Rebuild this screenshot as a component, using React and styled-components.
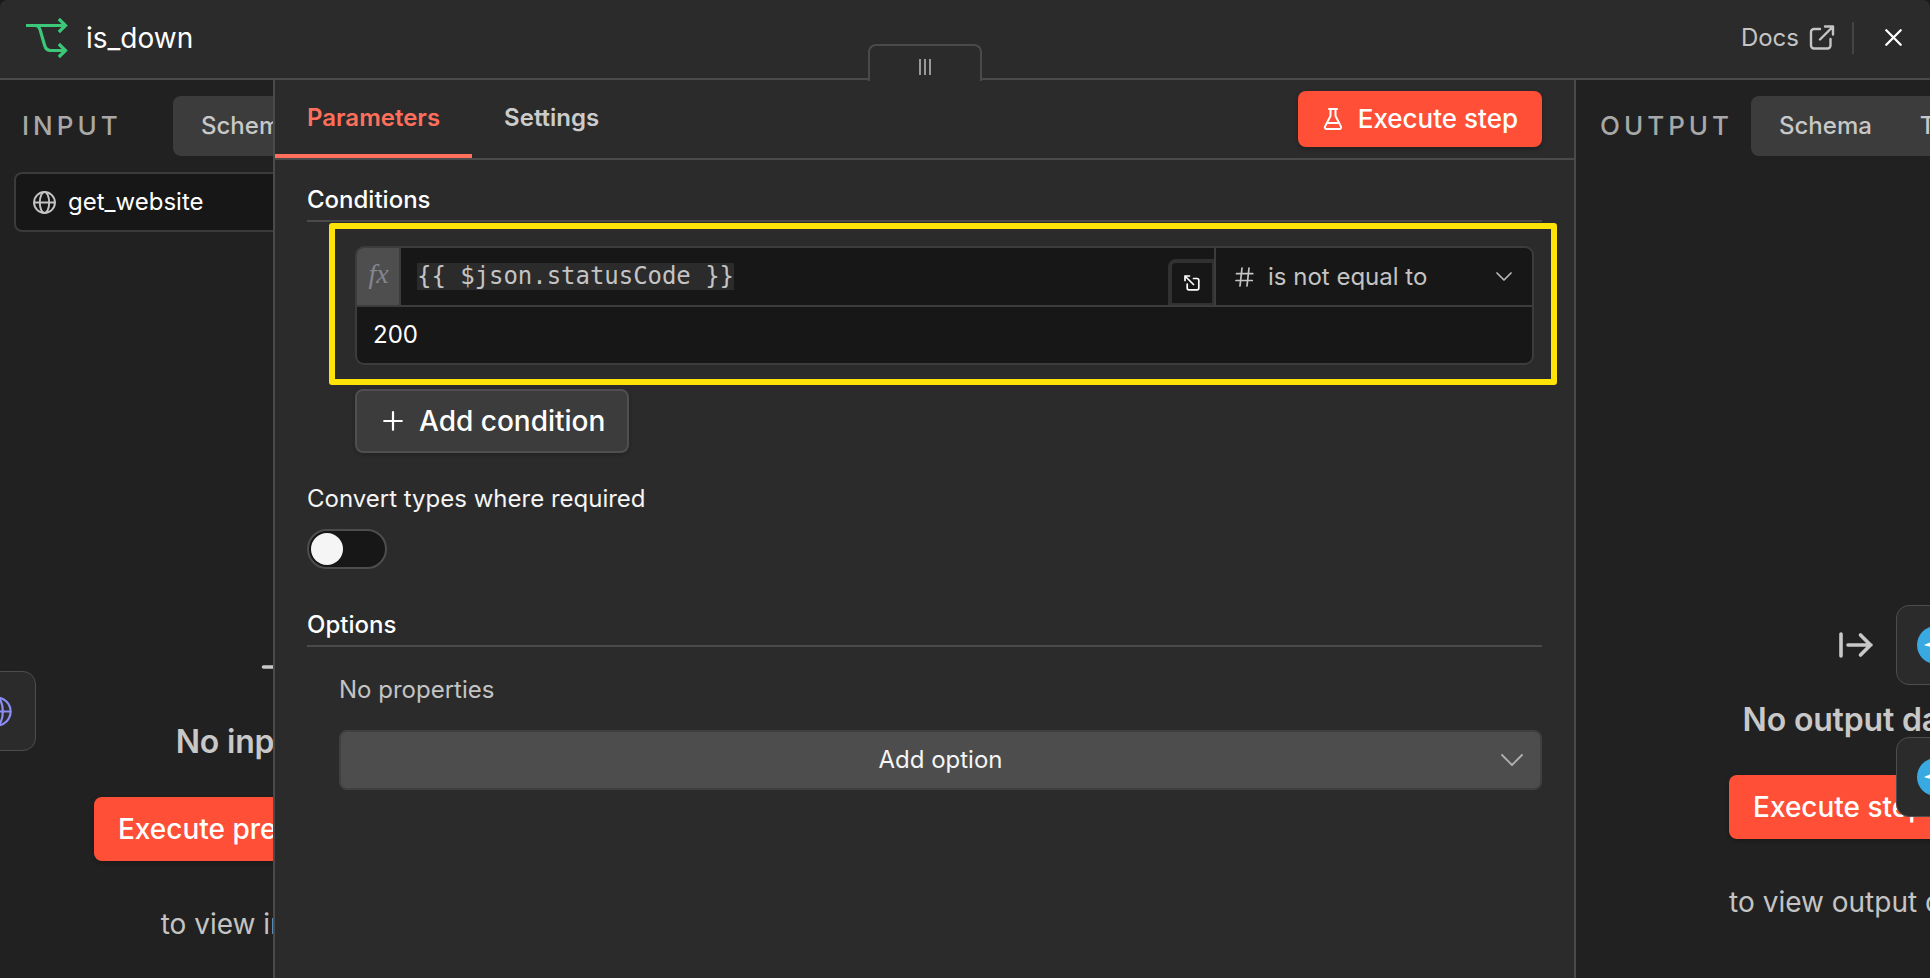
import React from "react";
import styled, { createGlobalStyle } from "styled-components";

const Global = createGlobalStyle`
  *, *::before, *::after { box-sizing: border-box; }
  html, body { margin: 0; padding: 0; background: #212121; overflow: hidden; }
  button { font: inherit; }
`;

const Window = styled.div`
  position: relative;
  width: 1930px;
  height: 978px;
  display: flex;
  flex-direction: column;
  overflow: hidden;
  background: #1a1a1a;
  color: #fff;
  font-family: Inter, "Liberation Sans", sans-serif;
  font-size: 24px;
  line-height: 30px;
  white-space: nowrap;
`;

const Header = styled.header`
  position: relative;
  flex: none;
  height: 80px;
  display: flex;
  align-items: center;
  padding: 0 28px 3px 26px;
  background: #2b2b2b;
  border-bottom: 2px solid #4a4a4a;
  border-radius: 7px 7px 0 0;
`;

const Title = styled.h1`
  margin: 0 0 0 18px;
  flex: 1;
  font-size: 28px;
  line-height: 34px;
  font-weight: 400;
`;

const DocsLink = styled.a`
  display: flex;
  align-items: center;
  gap: 10px;
  color: #c4c4c4;
`;

const HeaderRule = styled.span`
  width: 2px;
  height: 32px;
  margin: 0 31px 0 17px;
  background: #444;
`;

const DragHandle = styled.div`
  position: absolute;
  left: 868px;
  top: 44px;
  width: 114px;
  height: 37px;
  display: flex;
  justify-content: center;
  gap: 3.2px;
  padding-top: 13px;
  background: #2b2b2b;
  border: 2px solid #4a4a4a;
  border-bottom: 0;
  border-radius: 8px 8px 0 0;
`;

const Grip = styled.i`
  width: 2.2px;
  height: 16px;
  background: #999;
`;

const Columns = styled.div`
  flex: 1;
  display: flex;
  min-height: 0;
`;

const SidePanel = styled.aside`
  width: ${(p) => p.$width};
  flex: none;
  display: flex;
  flex-direction: column;
  overflow: hidden;
  background: #212121;
`;

const PanelHead = styled.div`
  flex: none;
  display: flex;
  align-items: center;
  margin-top: 16px;
  padding-left: ${(p) => p.$pad};
`;

const PanelLabel = styled.div`
  flex: none;
  width: ${(p) => p.$width};
  font-size: 26px;
  font-weight: 500;
  letter-spacing: 4px;
  color: #a8a8a8;
`;

const ViewSwitch = styled.div`
  flex: none;
  display: flex;
  align-items: center;
  gap: 48px;
  width: 400px;
  height: 60px;
  padding-left: 28px;
  border-radius: 8px;
  background: #3c3c3c;
  color: #c8c8c8;
  font-weight: 500;
`;

const SourceSelect = styled.div`
  flex: none;
  display: flex;
  align-items: center;
  gap: 12px;
  width: 400px;
  height: 60px;
  margin: 16px 0 0 14px;
  padding-left: 17px;
  border: 2px solid #3b3b3b;
  border-radius: 8px;
  background: #171717;
`;

const Empty = styled.div`
  flex: none;
  display: flex;
  flex-direction: column;
  align-items: center;
  align-self: flex-start;
  width: ${(p) => p.$width};
  margin: ${(p) => p.$margin};
`;

const EmptyTitle = styled.div`
  margin-top: 41px;
  font-size: 32px;
  line-height: 40px;
  font-weight: 600;
  letter-spacing: -0.18px;
  color: #c8c8c8;
`;

const EmptyNote = styled.div`
  margin-top: 45px;
  font-size: 28px;
  line-height: 36px;
  color: #c4c4c4;
`;

const PrimaryButton = styled.button`
  flex: none;
  display: flex;
  align-items: center;
  gap: ${(p) => (p.$large ? "0" : "14.5px")};
  height: ${(p) => (p.$large ? "64px" : "56px")};
  min-width: ${(p) => (p.$large ? "254px" : "0")};
  margin: ${(p) => (p.$large ? "35px 0 0" : "0")};
  padding: 0 ${(p) => (p.$large ? "24px" : "24px 0 25.5px")};
  border: 0;
  border-radius: 8px;
  background: #ff4f36;
  color: #fff;
  font-size: ${(p) => (p.$large ? "28px" : "26px")};
  font-weight: 500;
  box-shadow: 0 2px 4px rgba(0, 0, 0, 0.25);
`;

const Main = styled.main`
  width: 1303px;
  flex: none;
  border: solid #4a4a4a;
  border-width: 0 2px;
  background: #2b2b2b;
`;

const Tabs = styled.nav`
  display: flex;
  align-items: center;
  height: 80px;
  padding-right: 32px;
  border-bottom: 2px solid #4a4a4a;
`;

const Tab = styled.div`
  height: 78px;
  padding: 23px 32px 0;
  font-weight: 600;
  color: ${(p) => (p.$active ? "#ff6f5c" : "#cccccc")};
  border-bottom: 4px solid ${(p) => (p.$active ? "#ff6f5c" : "transparent")};
`;

const Grow = styled.span`
  flex: 1;
`;

const Form = styled.div`
  padding: 24px 32px 0;
`;

const SectionTitle = styled.h2`
  margin: ${(p) => p.$top || "0"} 0 0;
  padding-top: 1px;
  height: 38px;
  font-size: 24px;
  font-weight: 500;
  border-bottom: 2px solid #4a4a4a;
`;

const Filter = styled.section`
  position: relative;
  padding: 24px 8px 0 48px;
`;

const Highlight = styled.div`
  position: absolute;
  left: 22px;
  top: 1px;
  width: 1228px;
  height: 162px;
  border: 6px solid #ffe208;
  border-radius: 3px;
`;

const Condition = styled.div`
  height: 119px;
  border: 2px solid #3c3c3c;
  border-radius: 9px;
  background: #171717;
  overflow: hidden;
`;

const ConditionTop = styled.div`
  display: flex;
  height: 59px;
  border-bottom: 2px solid #3c3c3c;
`;

const FxBadge = styled.div`
  width: 44px;
  margin: -2px 0 0 -2px;
  padding: 11px 0 0 1px;
  text-align: center;
  border: solid #646464;
  border-width: 2px 0 0 2px;
  border-radius: 9px 0 0 0;
  background: #4e4e4e;
  color: #85858f;
  font-family: "Liberation Serif", serif;
  font-style: italic;
  font-size: 28px;
`;

const Expression = styled.div`
  flex: 1;
  padding: 13px 0 0 16px;
  border-left: 2px solid #3c3c3c;
`;

const Code = styled.code`
  display: inline-block;
  height: 27px;
  line-height: 27px;
  background: #2b2b2b;
  color: #c4c4c4;
  font-family: "DejaVu Sans Mono", monospace;
  font-size: 24px;
  letter-spacing: -0.04px;
`;

const ExpandButton = styled.div`
  display: flex;
  align-self: flex-end;
  width: 46px;
  height: 46px;
  padding: 12px 0 0 12px;
  border: 4px solid #313131;
  border-width: 4px 2px 2px 4px;
  border-radius: 8px 0 0 0;
`;

const Operator = styled.div`
  width: 318px;
  display: flex;
  align-items: center;
  padding: 0 20px 0 19px;
  border-left: 2px solid #3c3c3c;
  color: #c4c4c4;

  span { flex: 1; margin-left: 14px; }
`;

const ConditionValue = styled.div`
  display: flex;
  align-items: center;
  height: 56px;
  padding-left: 16px;
`;

const SecondaryButton = styled.button`
  display: flex;
  align-items: center;
  gap: 16px;
  width: 274px;
  height: 64px;
  margin-top: 24px;
  padding: 0 0 0 26px;
  border: 2px solid #4f4f4f;
  border-radius: 8px;
  background: #3c3c3c;
  color: #fff;
  font-size: 28px;
  font-weight: 500;
  box-shadow: 0 2px 4px rgba(0, 0, 0, 0.2);
`;

const FieldLabel = styled.div`
  margin-top: 31px;
  color: #f5f5f5;
`;

const Toggle = styled.div`
  width: 80px;
  height: 40px;
  margin-top: 15px;
  padding: 2px;
  border: 2px solid #4d4d4d;
  border-radius: 20px;
  background: #171717;
`;

const Knob = styled.div`
  width: 32px;
  height: 32px;
  border-radius: 50%;
  background: #f5f5f5;
`;

const Options = styled.div`
  padding: 28px 0 0 32px;
  color: #c4c4c4;
`;

const OptionSelect = styled.div`
  display: flex;
  align-items: center;
  height: 60px;
  margin-top: 25px;
  padding: 0 17px 0 39px;
  border: 2px solid #404040;
  border-radius: 8px;
  background: #4d4d4d;
  color: #f5f5f5;

  span { flex: 1; text-align: center; }
`;

const CanvasNode = styled.div`
  position: absolute;
  left: ${(p) => p.$x}px;
  top: ${(p) => p.$y}px;
  width: 80px;
  height: 80px;
  display: flex;
  align-items: center;
  justify-content: center;
  border: 1.5px solid #4d4d4d;
  border-radius: 13px;
  background: #2b2b2b;
`;

const stroke = { fill: "none", strokeLinecap: "round", strokeLinejoin: "round" };

const BranchIcon = () => (
  <svg width="42" height="42" viewBox="26 17 42 42" fill="none" stroke="#3bc878" strokeWidth="3.2">
    <path d="M26 25.5H65.5M58.8 19l6.7 6.5-6.7 6.5" />
    <path d="M35 25.5c3.2 0 4.3 1.5 5.2 4.6l4.4 15.2c1 3.6 2.4 5.2 5.9 5.2h15M58.8 44l6.7 6.5-6.7 6.5" />
  </svg>
);

const ExternalIcon = () => (
  <svg width="26" height="26" viewBox="0 0 26 26" {...stroke} stroke="#c4c4c4" strokeWidth="2.4">
    <path d="M16 1.500h8v8M24 1.500 11 14.500M11 4H5A3 3 0 0 0 2 7V20.500a3 3 0 0 0 3 3h13.500a3 3 0 0 0 3-3v-6.500" />
  </svg>
);

const CloseIcon = () => (
  <svg width="17" height="17" viewBox="0 0 17 17" {...stroke} stroke="#fff" strokeWidth="2.3">
    <path d="m1.300 1.300 14.400 14.400M15.700 1.300 1.300 15.700" />
  </svg>
);

const GlobeIcon = ({ size, color, width }) => (
  <svg width={size} height={size} viewBox="0 0 24 24" {...stroke} stroke={color} strokeWidth={width}>
    <circle cx="12" cy="12" r="10.900" />
    <ellipse cx="12" cy="12" rx="4.900" ry="10.900" />
    <path d="M1.200 12h21.600" />
  </svg>
);

const FlaskIcon = () => (
  <svg width="20" height="24" viewBox="0 0 20 24" {...stroke} stroke="#fff" strokeWidth="2">
    <path d="M6 2h8M7.500 2v7L2 19.600A1.700 1.700 0 0 0 3.500 22h13a1.700 1.700 0 0 0 1.500-2.400L12.500 9V2M4.500 16h11" />
  </svg>
);

const ExpandIcon = () => (
  <svg width="16" height="16" viewBox="0 0 16 16" {...stroke} stroke="#fff" strokeWidth="1.7">
    <path d="M1 5.500V1h4.500M1 1l8.500 8.500M9.500 3.500H13A1.800 1.800 0 0 1 14.800 5.300V13a1.800 1.800 0 0 1-1.800 1.800H5A1.800 1.800 0 0 1 3.200 13V9" />
  </svg>
);

const HashIcon = () => (
  <svg width="19" height="20" viewBox="0 0 19 20" {...stroke} stroke="#c4c4c4" strokeWidth="1.7">
    <path d="M1.500 6.700h16.300M1 13.500h16.300M7 1 5 19M14 1l-2 18" />
  </svg>
);

const PlusIcon = () => (
  <svg width="20" height="20" viewBox="0 0 20 20" {...stroke} stroke="#fff" strokeWidth="2.2">
    <path d="M10 1.200v17.600M1.200 10h17.600" />
  </svg>
);

const ChevronIcon = ({ width, height, color, weight }) => (
  <svg width={width} height={height} viewBox={`0 0 ${width} ${height}`} {...stroke} stroke={color} strokeWidth={weight}>
    <path d={`M1 1 L${width / 2} ${height - 1} L${width - 1} 1`} />
  </svg>
);

const ArrowFromBarIcon = () => (
  <svg width="35" height="28" viewBox="0 0 35 28" {...stroke} stroke="#c8c8c8" strokeWidth="3.6">
    <path d="M2 3v22M9 14H32M21.500 4l10 10-10 10" />
  </svg>
);

const ArrowIntoBarIcon = () => (
  <svg width="35" height="28" viewBox="0 0 35 28" {...stroke} stroke="#c8c8c8" strokeWidth="3.6">
    <path d="M2.500 14h23M15.500 4l10 10-10 10M33 3v22" />
  </svg>
);

const TelegramIcon = () => (
  <svg width="38" height="38" viewBox="0 0 38 38">
    <circle cx="19" cy="19" r="19" fill="#38aae1" />
    <path d="M8 18.600 28 10.500c1-.3 1.800.3 1.500 1.700l-3.400 15.600c-.3 1.200-1 1.400-2 .9l-5.200-3.900-2.600 2.500c-.6.600-1.300.3-1.400-.5l-1.200-5.800-5.500-1.500c-1-.3-1-.6-.2-.9Z" fill="#fff" />
  </svg>
);

export default function App() {
  return (
    <>
      <Global />
      <Window>
        <Header>
          <BranchIcon />
          <Title>is_down</Title>
          <DocsLink>
            Docs
            <ExternalIcon />
          </DocsLink>
          <HeaderRule />
          <CloseIcon />
          <DragHandle>
            <Grip />
            <Grip />
            <Grip />
          </DragHandle>
        </Header>

        <Columns>
          <SidePanel $width="273px">
            <PanelHead $pad="22px">
              <PanelLabel $width="151px">INPUT</PanelLabel>
              <ViewSwitch>Schema</ViewSwitch>
            </PanelHead>
            <SourceSelect>
              <GlobeIcon size={23} color="#c4c4c4" width={2} />
              get_website
            </SourceSelect>
            <Empty $width="370px" $margin="421px 0 0 93px">
              <ArrowIntoBarIcon />
              <EmptyTitle>No input data</EmptyTitle>
              <PrimaryButton $large>Execute previous nodes</PrimaryButton>
              <EmptyNote>to view input data</EmptyNote>
            </Empty>
          </SidePanel>

          <Main>
            <Tabs>
              <Tab $active>Parameters</Tab>
              <Tab>Settings</Tab>
              <Grow />
              <PrimaryButton>
                <FlaskIcon />
                Execute step
              </PrimaryButton>
            </Tabs>
            <Form>
              <SectionTitle>Conditions</SectionTitle>
              <Filter>
                <Condition>
                  <ConditionTop>
                    <FxBadge>fx</FxBadge>
                    <Expression>
                      <Code>{"{{ $json.statusCode }}"}</Code>
                    </Expression>
                    <ExpandButton>
                      <ExpandIcon />
                    </ExpandButton>
                    <Operator>
                      <HashIcon />
                      <span>is not equal to</span>
                      <ChevronIcon width={16} height={9} color="#b8b8b8" weight={1.7} />
                    </Operator>
                  </ConditionTop>
                  <ConditionValue>200</ConditionValue>
                </Condition>
                <SecondaryButton>
                  <PlusIcon />
                  Add condition
                </SecondaryButton>
                <Highlight />
              </Filter>
              <FieldLabel>Convert types where required</FieldLabel>
              <Toggle>
                <Knob />
              </Toggle>
              <SectionTitle $top="40px">Options</SectionTitle>
              <Options>
                No properties
                <OptionSelect>
                  <span>Add option</span>
                  <ChevronIcon width={22} height={12} color="#b0b0b0" weight={1.8} />
                </OptionSelect>
              </Options>
            </Form>
          </Main>

          <SidePanel $width="354px">
            <PanelHead $pad="24px">
              <PanelLabel $width="151px">OUTPUT</PanelLabel>
              <ViewSwitch>
                <span>Schema</span>
                <span>Table</span>
              </ViewSwitch>
            </PanelHead>
            <Empty $width="254px" $margin="475px 0 0 153px">
              <ArrowFromBarIcon />
              <EmptyTitle>No output data</EmptyTitle>
              <PrimaryButton $large>Execute step</PrimaryButton>
              <EmptyNote>to view output data</EmptyNote>
            </Empty>
          </SidePanel>
        </Columns>

        <CanvasNode $x={-44} $y={671}>
          <GlobeIcon size={31} color="#8b8cf5" width={1.7} />
        </CanvasNode>
        <CanvasNode $x={1896} $y={605}>
          <TelegramIcon />
        </CanvasNode>
        <CanvasNode $x={1896} $y={737}>
          <TelegramIcon />
        </CanvasNode>
      </Window>
    </>
  );
}
